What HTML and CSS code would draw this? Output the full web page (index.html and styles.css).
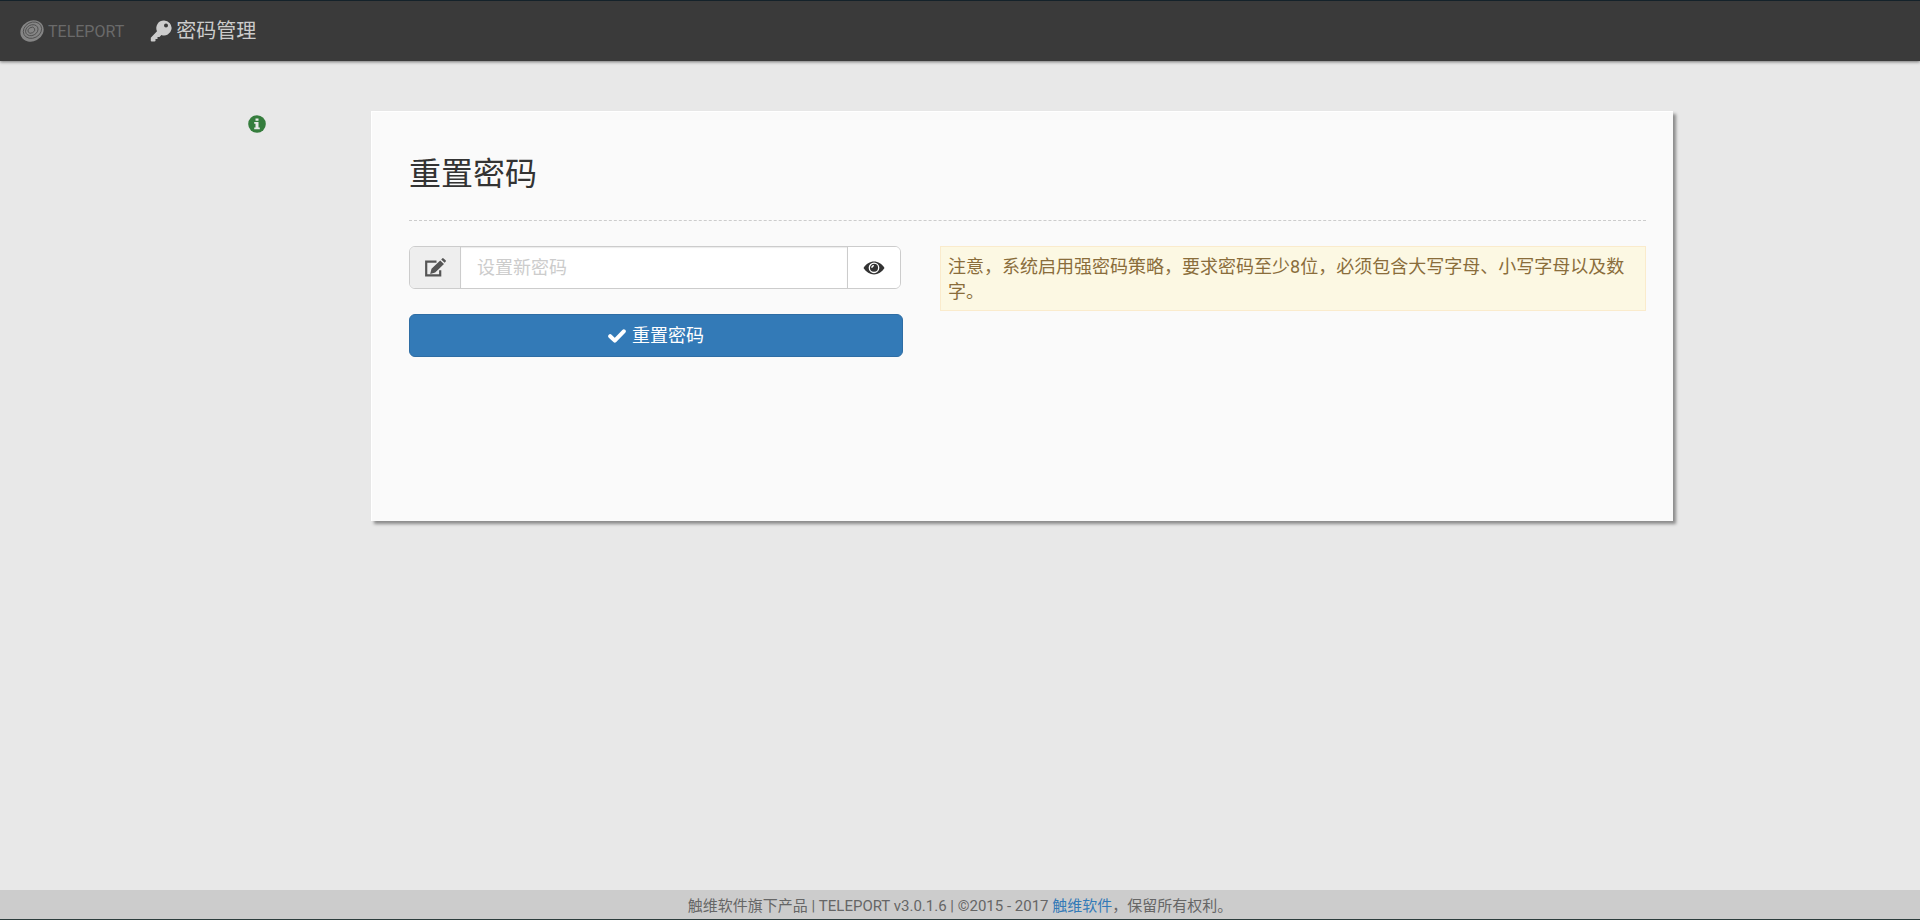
FILE: index.html
```html
<!DOCTYPE html>
<html lang="zh-CN">
<head>
<meta charset="utf-8">
<title>密码管理</title>
<link rel="stylesheet" href="styles.css">
</head>
<body>
<header class="topbar">
  <a class="logo" href="#">
    <svg class="logo-mark" viewBox="0 0 24 22" aria-hidden="true">
      <g transform="rotate(-28 12 11)">
        <ellipse cx="12" cy="11" rx="12" ry="10.300" fill="#858585"/>
        <g fill="none" stroke="#4a4a4a" stroke-width=".8">
          <ellipse cx="12.8" cy="10.5" rx="9.500" ry="7.800"/>
          <ellipse cx="12.2" cy="10.2" rx="6.500" ry="5.200"/>
          <ellipse cx="11.8" cy="10" rx="3.600" ry="2.800"/>
        </g>
      </g>
    </svg>
    <span class="logo-text">TELEPORT</span>
  </a>
  <div class="page-name">
    <svg class="icon-key" viewBox="0 0 22 22" aria-hidden="true"><path fill="#ccc" fill-rule="evenodd" d="M14 .5a7.500 7.500 0 1 1-2.600 14.500L9.500 17H7.500v2H5.500v2L4.500 21.500H1.500L.8 21v-3.200L7 11.200A7.500 7.500 0 0 1 14 .5zM16 3.600a2 2 0 1 0 .01 4a2 2 0 0 0-.01-4z"/></svg>
    <span>密码管理</span>
  </div>
</header>

<main class="content">
  <aside class="side">
    <svg class="icon-info" viewBox="0 0 18 18" aria-hidden="true"><circle cx="9" cy="9" r="8.800" fill="#357d3d"/><path fill="#e8e8e8" d="M7.500 3.500h3v2.300h-3zM6.200 7h4.300v5.500h1.300v1.700H6.200v-1.700h1.300V8.700H6.200z"/></svg>
  </aside>
  <section class="card">
    <h1 class="card-title">重置密码</h1>
    <form class="card-body">
      <div class="fields">
        <div class="input-group">
          <label class="addon" for="password" aria-label="设置新密码">
            <svg class="icon" viewBox="0 0 22 20" aria-hidden="true"><path fill="none" stroke="#555" stroke-width="2.200" d="M12.500 3.600H2.200v13.800h14v-5.200"/><path fill="#555" d="M16.200 2.400l3.800 3.600-8.800 8.600-5 1.400 1.300-5.200zM17.200 1.400l1-1q.7-.6 1.400 0l2 1.900q.6.700 0 1.400l-1 1z"/></svg>
          </label>
          <input class="field" id="password" type="password" placeholder="设置新密码">
          <button class="reveal" type="button" aria-label="显示密码">
            <svg class="icon" viewBox="0 0 22 20" aria-hidden="true"><path fill="#333" d="M.5 10C5.500 1.200 16.500 1.200 21.500 10C16.500 18.500 5.500 18.500 .5 10z"/><circle cx="11" cy="9.800" r="4.700" fill="none" stroke="#fff" stroke-width="1.300"/><path fill="none" stroke="#fff" stroke-width="1.400" d="M8.900 9.800q0-2 2-2.200"/></svg>
          </button>
        </div>
        <button class="submit" type="submit">
          <svg class="icon-check" viewBox="0 0 18 14" aria-hidden="true"><path fill="none" stroke="#fff" stroke-width="4" stroke-linecap="round" stroke-linejoin="round" d="M2.200 7.200l4.600 4.400L15.800 2.300"/></svg>
          <span>重置密码</span>
        </button>
      </div>
      <p class="notice">注意，系统启用强密码策略，要求密码至少8位，必须包含大写字母、小写字母以及数字。</p>
    </form>
  </section>
</main>

<footer class="footer">触维软件旗下产品 | TELEPORT v3.0.1.6 | ©2015 - 2017 <a href="#">触维软件</a>，保留所有权利。</footer>
</body>
</html>
```
FILE: styles.css
```css
* { box-sizing: border-box; }

body {
  margin: 0;
  min-height: 100vh;
  display: flex;
  flex-direction: column;
  background: #e8e8e8;
  color: #333;
  font-family: Roboto, "Noto Sans CJK SC", sans-serif;
  font-size: 18px;
  line-height: 25px;
  border-top: 1px solid #14222a;
  border-bottom: 1px solid #2c3c3c;
}

svg { display: block; flex: none; }

.topbar {
  display: flex;
  align-items: center;
  gap: 26px;
  height: 60px;
  padding: 0 20px;
  background: #3a3a3a;
  box-shadow: 0 1px 3px rgba(0, 0, 0, .5);
}

.logo {
  display: flex;
  align-items: center;
  gap: 4px;
  color: #6a6a6a;
  text-decoration: none;
}
.logo-mark { width: 24px; height: 22px; }
.logo-text { font-size: 16px; }

.page-name {
  display: flex;
  align-items: center;
  gap: 4px;
  color: #ccc;
  font-size: 20px;
}
.icon-key { width: 22px; height: 22px; }

.content {
  flex: 1;
  display: grid;
  grid-template-columns: 93px 1fr;
  gap: 30px;
  align-items: start;
  width: 75%;
  margin: 0 auto;
  padding: 50px 7px 40px 8px;
}
.side { padding-top: 4px; }
.icon-info { width: 18px; height: 18px; }

.card {
  min-height: 410px;
  padding: 39px 27px 30px 37px;
  background: #fafafa;
  border: 1px solid #fff;
  border-width: 1px 0 0 1px;
  box-shadow: 3px 3px 3px rgba(0, 0, 0, .4);
}
.card-title {
  margin: 0 0 25px;
  padding-bottom: 23px;
  border-bottom: 1px dashed #ccc;
  font-size: 32px;
  font-weight: 400;
  line-height: 46px;
}
.card-body {
  display: grid;
  grid-template-columns: 7fr 10fr;
  gap: 37px;
  align-items: start;
}
.fields { display: grid; gap: 25px; }

.input-group {
  display: flex;
  height: 43px;
  margin-right: 2px;
  background: #fff;
  border: 1px solid #ccc;
  border-radius: 6px;
  overflow: hidden;
}
.addon {
  display: flex;
  align-items: center;
  justify-content: center;
  width: 51px;
  background: #eee;
  border-right: 1px solid #ccc;
}
.icon { width: 22px; height: 20px; }
.field {
  flex: 1;
  min-width: 0;
  padding: 0 16px;
  border: 0;
  background: none;
  color: #555;
  font: inherit;
  box-shadow: inset 0 1px 1px rgba(0, 0, 0, .08);
}
.field::placeholder { color: #ccc; opacity: 1; }
.reveal {
  display: flex;
  align-items: center;
  justify-content: center;
  width: 53px;
  padding: 0;
  border: 0;
  border-left: 1px solid #ccc;
  background: #fff;
}

.submit {
  display: flex;
  align-items: center;
  justify-content: center;
  gap: 6px;
  height: 43px;
  padding: 0 16px;
  border: 1px solid #2e6da4;
  border-radius: 6px;
  background: #337ab7;
  color: #fff;
  font: inherit;
}
.icon-check { width: 18px; height: 14px; }

.notice {
  margin: 0;
  padding: 7px 7px 6px;
  border: 1px solid #faebcc;
  background: #fcf8e3;
  color: #8a6d3b;
}

.footer {
  padding: 4px 0 0;
  background: #ccc;
  color: #666;
  font-size: 15px;
  line-height: 25px;
  text-align: center;
}
.footer a { color: #337ab7; text-decoration: none; }
```
